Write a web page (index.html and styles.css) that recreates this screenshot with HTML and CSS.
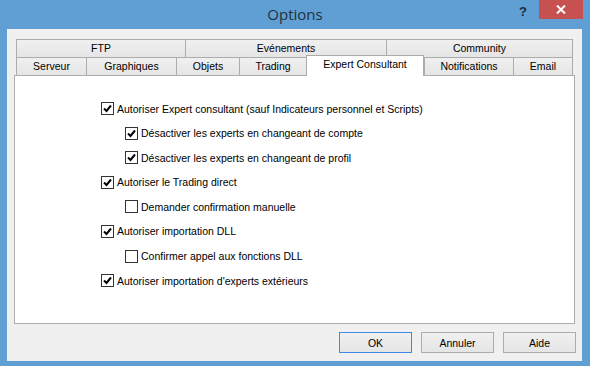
FILE: index.html
```html
<!DOCTYPE html>
<html lang="fr">
<head>
<meta charset="UTF-8" />
<meta name="viewport" content="width=device-width, initial-scale=1" />
<title>Options</title>
<link rel="stylesheet" href="styles.css">
</head>
<body>
  <div class="window">
    <div class="titlebar">
      <span class="title">Options</span>
      <span class="help">?</span>
      <span class="close">
        <svg width="10" height="9" viewBox="0 0 10 9"><path d="M1 0.5 L9 8.5 M9 0.5 L1 8.5" stroke="#fff" stroke-width="2"/></svg>
      </span>
    </div>

    <div class="client">
      <div class="tabs">
        <div class="tab-row">
          <div class="tab" style="width:169px">FTP</div>
          <div class="tab" style="width:201px">Evénements</div>
          <div class="tab" style="width:187px">Community</div>
        </div>
        <div class="tab-row">
          <div class="tab" style="width:70px">Serveur</div>
          <div class="tab" style="width:90px">Graphiques</div>
          <div class="tab" style="width:63px">Objets</div>
          <div class="tab" style="width:67px">Trading</div>
          <div class="tab active" style="width:118px">Expert Consultant</div>
          <div class="tab" style="width:89px">Notifications</div>
          <div class="tab" style="width:60px">Email</div>
        </div>
      </div>

      <div class="panel">
        <label class="opt"><span class="box checked"></span>Autoriser Expert consultant (sauf Indicateurs personnel et Scripts)</label>
        <label class="opt sub"><span class="box checked"></span>Désactiver les experts en changeant de compte</label>
        <label class="opt sub"><span class="box checked"></span>Désactiver les experts en changeant de profil</label>
        <label class="opt"><span class="box checked"></span>Autoriser le Trading direct</label>
        <label class="opt sub"><span class="box"></span>Demander confirmation manuelle</label>
        <label class="opt"><span class="box checked"></span>Autoriser importation DLL</label>
        <label class="opt sub"><span class="box"></span>Confirmer appel aux fonctions DLL</label>
        <label class="opt"><span class="box checked"></span>Autoriser importation d'experts extérieurs</label>
      </div>

      <div class="buttons">
        <button class="btn default">OK</button>
        <button class="btn">Annuler</button>
        <button class="btn">Aide</button>
      </div>
    </div>
  </div>
</body>
</html>
```

FILE: styles.css
```css
* {
  margin: 0; padding: 0; box-sizing: border-box;
}
body {
  font-family: "Liberation Sans", Arial, sans-serif;
  font-size: 10.5px;
  color: #000;
  background: #5f9fd3;
  width: 590px;
  height: 366px;
  overflow: hidden;
}
.window {
  width: 590px;
  height: 366px;
  background: #5f9fd3;
}
.titlebar {
  height: 29px;
  display: flex;
  align-items: flex-start;
  position: relative;
}
.title {
  position: absolute;
  left: 0; right: 0; top: 4px;
  text-align: center;
  font-family: "Open Sans", "Noto Sans", sans-serif;
  font-size: 15px;
  color: #22323f;
}
.help {
  margin-left: auto;
  margin-top: 4px;
  margin-right: 12px;
  font-family: "Liberation Sans", Arial, sans-serif;
  font-weight: bold;
  font-size: 13px;
  color: #1e2a36;
}
.close {
  width: 44px;
  height: 19px;
  margin-right: 7px;
  background: #c75050;
  display: flex;
  justify-content: center;
  align-items: center;
}
.client {
  margin: 0 8px 0 7px;
  height: 332px;
  background: #f0f0f0;
  padding-top: 10px;
}
.tabs {
  margin-left: 9px;
}
.tab-row {
  display: flex;
  height: 18px;
}
.tab {
  border: 1px solid #acacac;
  border-bottom: none;
  border-right: none;
  background: linear-gradient(#f0f0f0, #e5e5e5);
  text-align: center;
  line-height: 17px;
  white-space: nowrap;
}
.tab:last-child {
  border-right: 1px solid #acacac;
}
.tab.active {
  position: relative;
  z-index: 1;
  margin-top: -2px;
  margin-bottom: -1px;
  border-right: 1px solid #acacac;
  background: #fff;
  line-height: 17px;
}
.panel {
  margin-left: 7px;
  width: 561px;
  height: 249px;
  background: #fff;
  border: 1px solid #acacac;
  padding: 26px 0 0 86px;
  display: flex;
  flex-direction: column;
  gap: 11.6px;
}
.opt {
  display: flex;
  align-items: center;
  height: 13px;
  white-space: nowrap;
}
.opt.sub {
  padding-left: 24px;
}
.box {
  width: 13px;
  height: 13px;
  border: 1px solid #333;
  background: #fff;
  margin-right: 3px;
  flex-shrink: 0;
}
.box.checked {
  background: #fff url("data:image/svg+xml,%3Csvg xmlns='http://www.w3.org/2000/svg' width='11' height='11' viewBox='0 0 11 11'%3E%3Cpath d='M2 5.5 L4.5 8 L9 2.5' fill='none' stroke='%23000' stroke-width='2'/%3E%3C/svg%3E") center no-repeat;
}
.buttons {
  display: flex;
  justify-content: flex-end;
  gap: 9px;
  margin-top: 8px;
  margin-right: 6px;
}
.btn {
  width: 73px;
  height: 21px;
  border: 1px solid #acacac;
  background: linear-gradient(#f0f0f0, #e5e5e5);
  font-family: "Liberation Sans", Arial, sans-serif;
  font-size: 10.5px;
  color: #000;
}
.btn.default {
  border-color: #3c8be6;
}
```
